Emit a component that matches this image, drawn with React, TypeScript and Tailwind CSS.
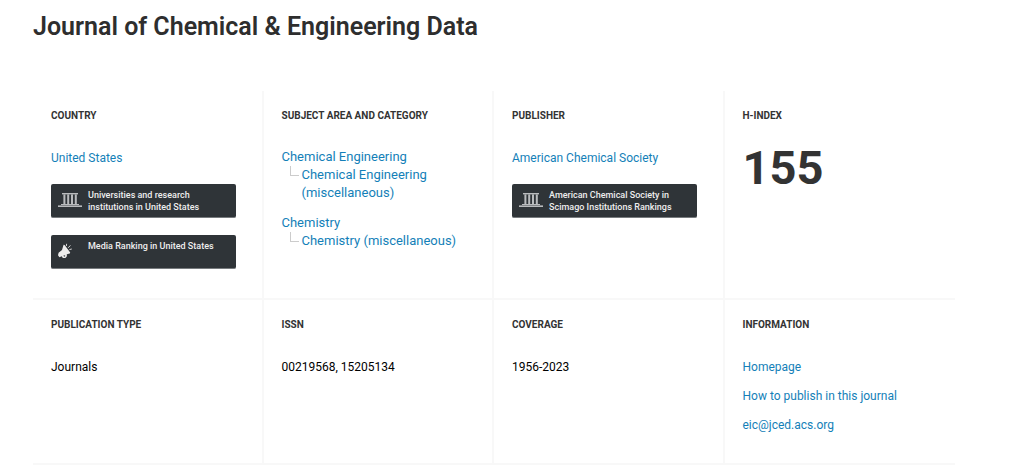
import type { ReactNode } from 'react';

function InstitutionIcon() {
  return (
    <svg viewBox="0 0 24 16" className="w-6 h-4 fill-[#b9bbbd]" aria-hidden="true">
      <rect x="4" y="1" width="16" height="1.4" />
      <rect x="5.4" y="2.4" width="2" height="9.6" />
      <rect x="9.2" y="2.4" width="2" height="9.6" />
      <rect x="13" y="2.4" width="2" height="9.6" />
      <rect x="16.8" y="2.4" width="2" height="9.6" />
      <rect x="3" y="12" width="18" height="1" />
      <rect x="0" y="13.4" width="24" height="1.6" />
    </svg>
  );
}

function MegaphoneIcon() {
  return (
    <svg viewBox="0 0 16 16" className="w-4 h-4 fill-[#ededed]" aria-hidden="true">
      <path d="M5.6 1.8 6.6 2 12.2 9.6 11.8 10.6 8.8 11.3 8.9 13.2 7.4 15 4.8 15 3.8 13.2 1.4 14.2 0 12.2.6 9.8 4 7Z" />
      <path d="m5.2 12.8 1.2.9 1-.8-.6-.6z" fill="#2f3438" />
      <path d="M8.4 3 8.6.8M10.2 4.8 12.4 2.4M11.4 6.6l2.4-.6" stroke="#d5d5d5" strokeWidth="1" fill="none" />
    </svg>
  );
}

function Cell({ title, last, children }: { title: string; last?: boolean; children: ReactNode }) {
  return (
    <div className={last ? 'px-[18px] pt-[17px]' : 'px-[18px] pt-[17px] border-r-2 border-[#f8f8f8]'}>
      <h2 className="text-[10px] leading-4 font-bold uppercase text-[#333333]">{title}</h2>
      {children}
    </div>
  );
}

function RankingLink({ icon, children }: { icon: ReactNode; children: ReactNode }) {
  return (
    <a
      href="#"
      className="flex h-[34px] mr-2 pl-[7px] bg-[#2f3438] rounded-[2px] border-b border-[#777b7e] text-[9px] leading-3 font-medium text-[#eeeeee]"
    >
      <span className="w-[30px] shrink-0 pt-2">{icon}</span>
      <span className="pt-[5px]">{children}</span>
    </a>
  );
}

function Area({ name, category }: { name: string; category: string }) {
  return (
    <li className="text-[13px] leading-[18px]">
      <a href="#">{name}</a>
      <div className="flex pl-2">
        <span className="w-[9px] h-[10px] mr-[3px] shrink-0 border-l border-b border-[#cccccc]" />
        <a href="#">{category}</a>
      </div>
    </li>
  );
}

export default function App() {
  return (
    <main className="pl-[33px] pr-[69px] bg-white font-[Roboto,sans-serif] text-[12px] leading-4 text-black">
      <h1 className="pt-[11px] text-[25px] leading-8 font-semibold text-[#2e2e2e]">
        Journal of Chemical &amp; Engineering Data
      </h1>

      <section className="mt-12 grid grid-cols-4 min-h-[209px] border-b-2 border-[#f8f8f8]">
        <Cell title="Country">
          <p className="mt-[26px]">
            <a href="#" className="text-[#147fb8]">United States</a>
          </p>
          <div className="mt-[18px] flex flex-col gap-[17px]">
            <RankingLink icon={<InstitutionIcon />}>
              Universities and research
              <br />
              institutions in United States
            </RankingLink>
            <RankingLink icon={<MegaphoneIcon />}>Media Ranking in United States</RankingLink>
          </div>
        </Cell>

        <Cell title="Subject Area and Category">
          <ul className="mt-6 flex flex-col gap-3 text-[#147fb8]">
            <Area name="Chemical Engineering" category="Chemical Engineering (miscellaneous)" />
            <Area name="Chemistry" category="Chemistry (miscellaneous)" />
          </ul>
        </Cell>

        <Cell title="Publisher">
          <p className="mt-[26px] mb-[18px]">
            <a href="#" className="text-[#147fb8]">American Chemical Society</a>
          </p>
          <RankingLink icon={<InstitutionIcon />}>
            American Chemical Society in
            <br />
            Scimago Institutions Rankings
          </RankingLink>
        </Cell>

        <Cell title="H-Index" last>
          <p className="mt-5 text-[47px] leading-[48px] font-bold text-[#333333]">155</p>
        </Cell>
      </section>

      <section className="grid grid-cols-4 min-h-[165px] border-b-2 border-[#f8f8f8]">
        <Cell title="Publication type">
          <p className="mt-[26px]">Journals</p>
        </Cell>
        <Cell title="ISSN">
          <p className="mt-[26px]">00219568, 15205134</p>
        </Cell>
        <Cell title="Coverage">
          <p className="mt-[26px]">1956-2023</p>
        </Cell>
        <Cell title="Information" last>
          <div className="mt-[26px] flex flex-col items-start gap-[13px] text-[#147fb8]">
            <a href="#">Homepage</a>
            <a href="#">How to publish in this journal</a>
            <a href="#">eic@jced.acs.org</a>
          </div>
        </Cell>
      </section>
    </main>
  );
}
